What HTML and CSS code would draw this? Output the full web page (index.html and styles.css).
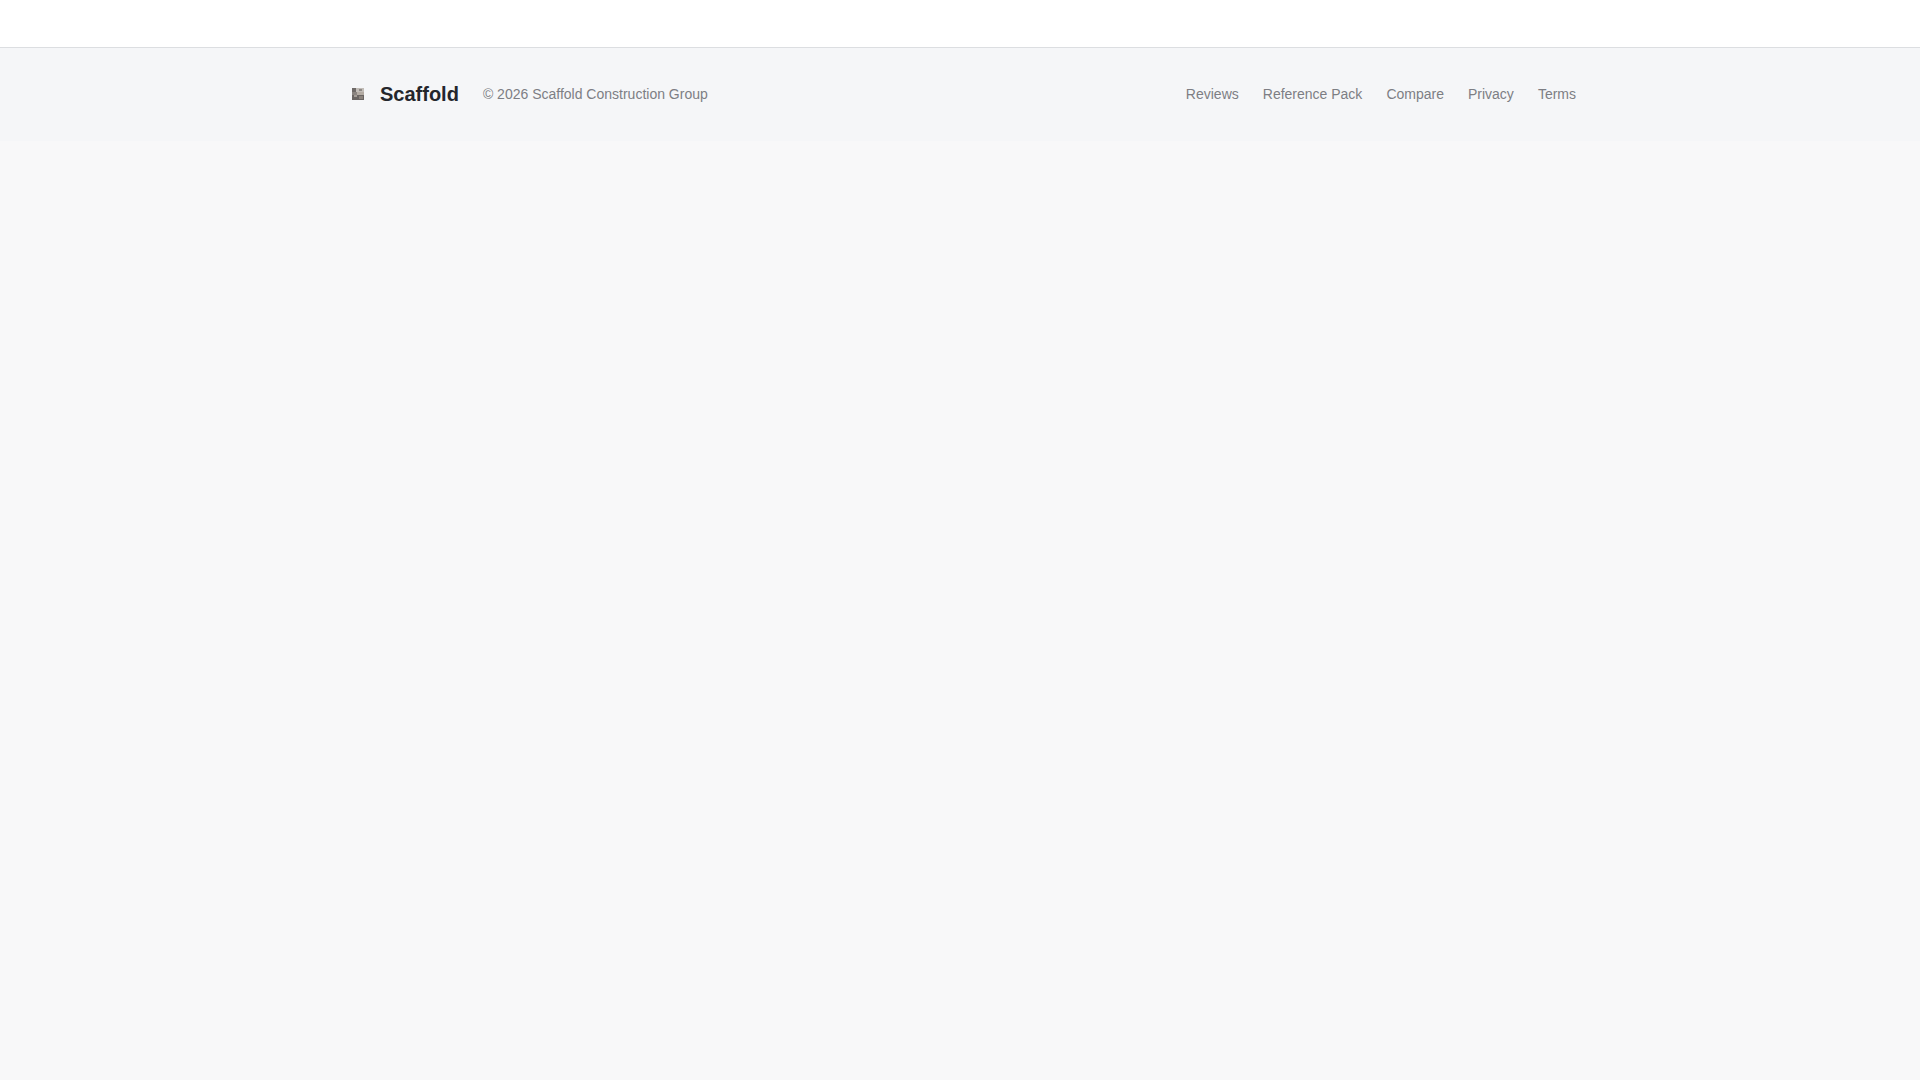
FILE: index.html
```html
<!DOCTYPE html>
<html lang="en">
<head>
<meta charset="utf-8">
<title>Scaffold</title>
<link rel="stylesheet" href="styles.css">
</head>
<body>
<header class="topbar"></header>
<footer class="footer">
  <div class="footer-inner">
    <div class="brand">
      <a class="logo" href="#">
        <span class="logo-box">
          <svg class="logo-img" viewBox="0 0 12 12" width="12" height="12" aria-hidden="true">
            <rect width="12" height="12" fill="#99938f"/>
            <rect width="4" height="4" fill="#6f6a68"/>
            <rect x="4" width="8" height="4" fill="#c2bdb8"/>
            <rect x="7" y="1" width="3" height="2" fill="#8d8884"/>
            <rect y="4" width="5" height="3" fill="#8a8480"/>
            <rect x="5" y="4" width="7" height="3" fill="#b3aba3"/>
            <rect y="7" width="12" height="5" fill="#6a6563"/>
            <rect x="2" y="7" width="3" height="2" fill="#a39c96"/>
            <rect x="7" y="8" width="4" height="3" fill="#8a827c"/>
          </svg>
        </span>
        <span class="logo-text">Scaffold</span>
      </a>
      <span class="copy">© 2026 Scaffold Construction Group</span>
    </div>
    <nav class="links">
      <a href="#">Reviews</a>
      <a href="#">Reference Pack</a>
      <a href="#">Compare</a>
      <a href="#">Privacy</a>
      <a href="#">Terms</a>
    </nav>
  </div>
</footer>
</body>
</html>
```

FILE: styles.css
```css
* { box-sizing: border-box; }
html, body { margin: 0; height: 100%; }
body {
  background: #f8f8f9;
  font-family: "Liberation Sans", Arial, sans-serif;
}
.topbar {
  height: 48px;
  background: #ffffff;
  border-bottom: 1px solid #dcdee1;
}
.footer {
  background: #f5f6f8;
  padding: 32px 0 33px;
}
.footer-inner {
  max-width: 1280px;
  margin: 0 auto;
  padding: 0 24px;
  display: flex;
  align-items: center;
  justify-content: space-between;
}
.brand { display: flex; align-items: center; gap: 24px; }
.logo { display: flex; align-items: center; gap: 8px; text-decoration: none; }
.logo-box { width: 28px; height: 28px; display: flex; align-items: center; justify-content: center; }
.logo-img { display: block; }
.logo-text { font-size: 20px; line-height: 28px; font-weight: 700; color: #24262c; }
.copy { font-size: 14px; line-height: 20px; color: #7d7e84; }
.links { display: flex; gap: 24px; }
.links a { font-size: 14px; line-height: 20px; color: #7d7e84; text-decoration: none; }
```
